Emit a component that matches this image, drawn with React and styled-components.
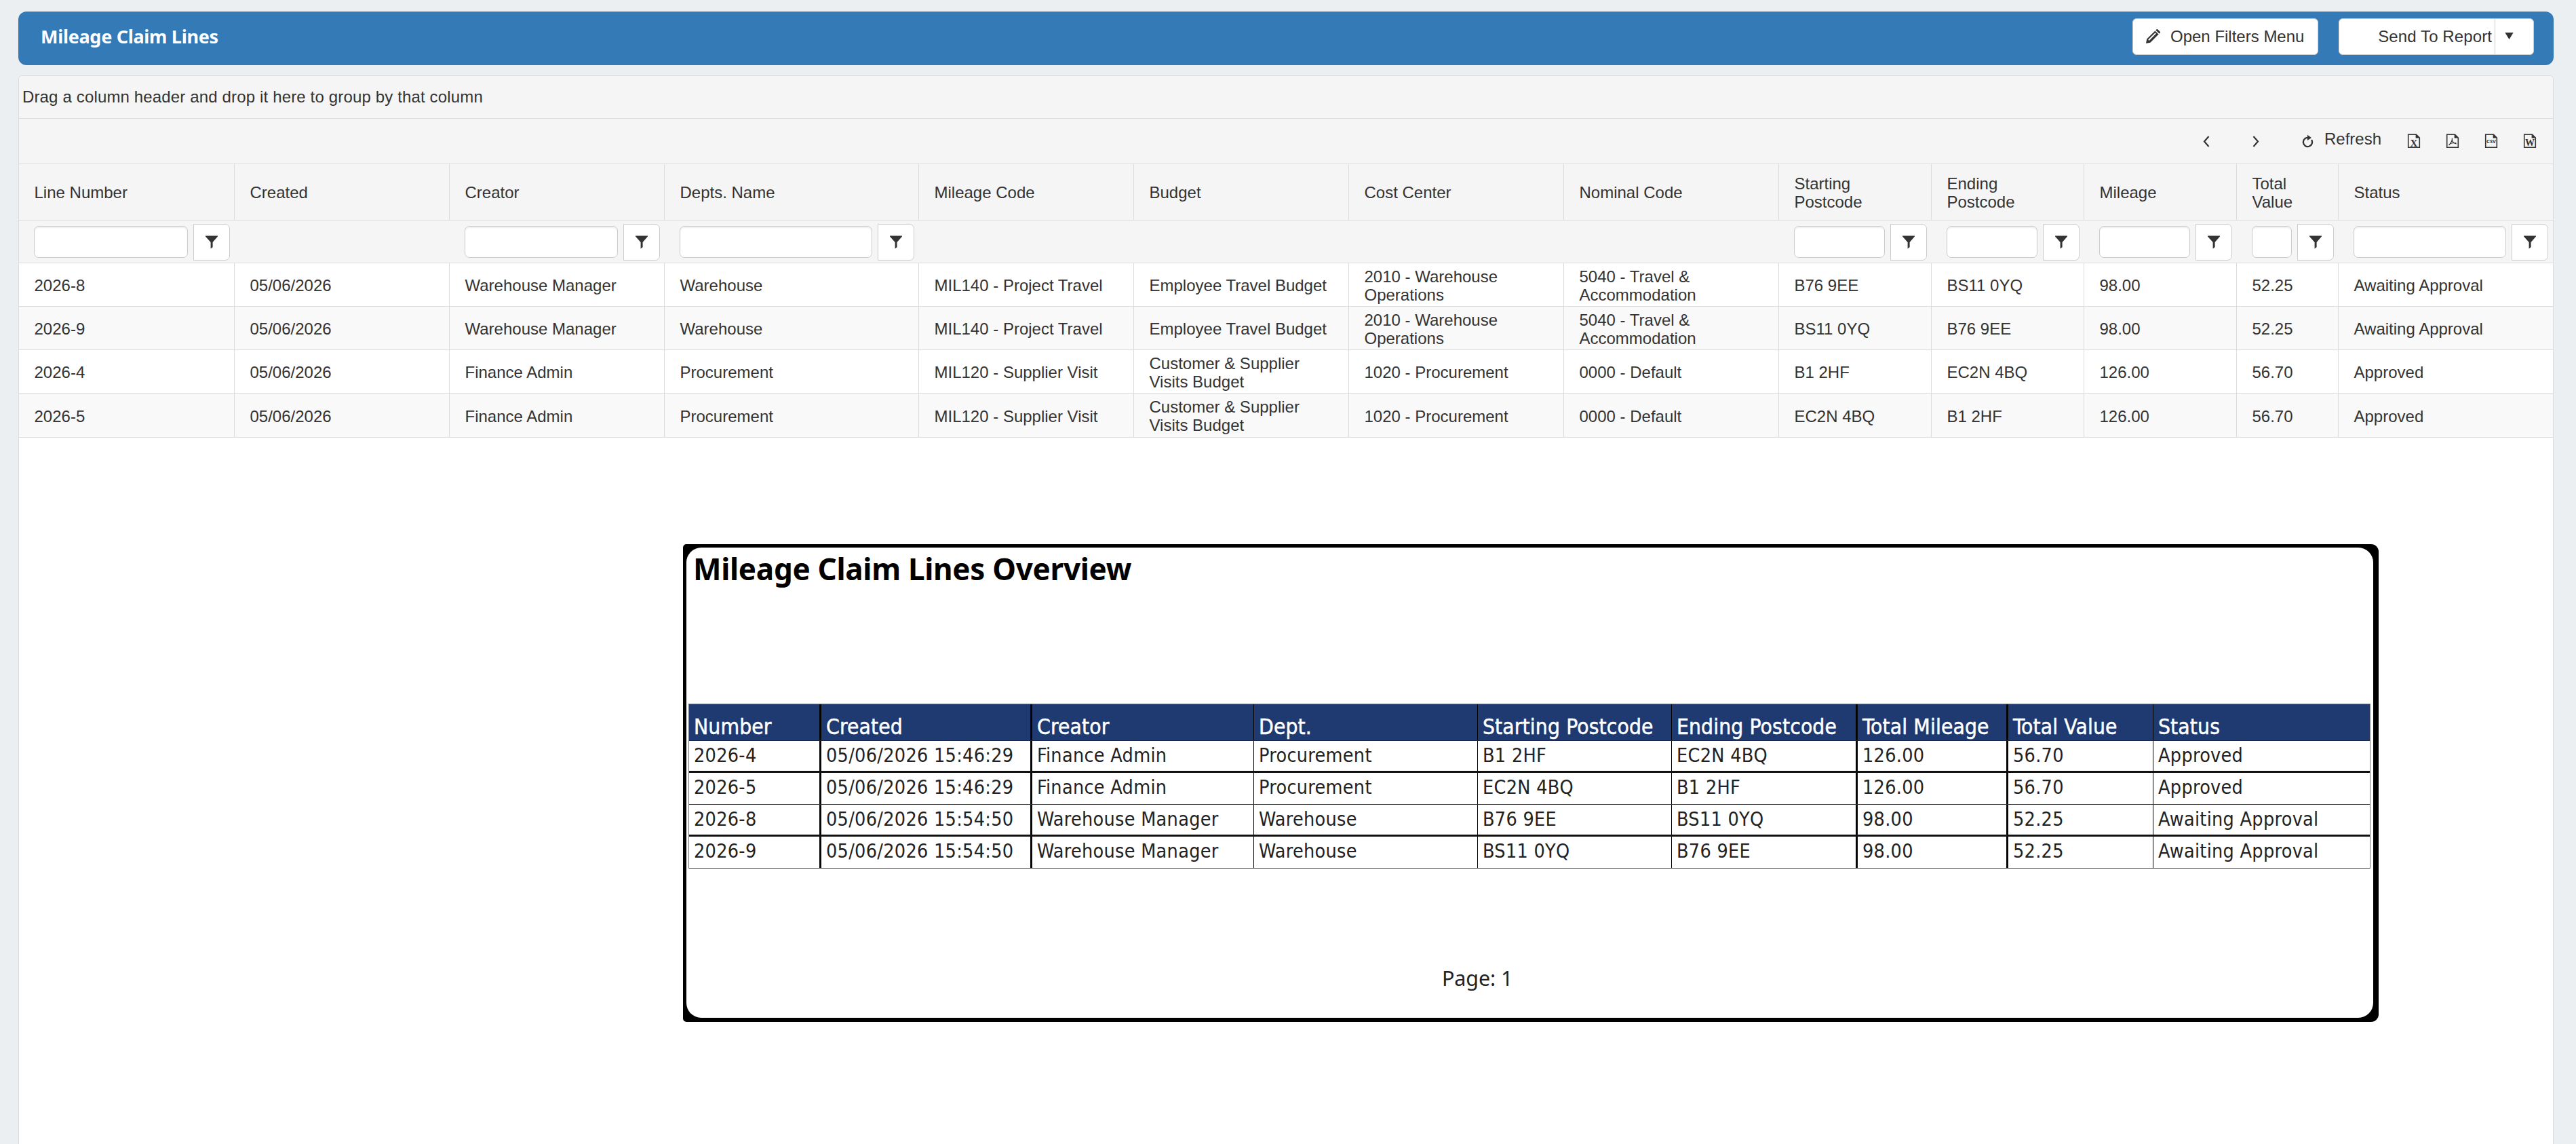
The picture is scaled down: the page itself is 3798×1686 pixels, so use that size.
import React from "react";
import styled, { createGlobalStyle, css } from "styled-components";

const GlobalStyle = createGlobalStyle`
  * {
    box-sizing: border-box;
  }
  body {
    margin: 0;
    background-color: #ebeff2;
    overflow: hidden;
    color: #333;
    font-family: "Liberation Sans", Arial, sans-serif;
    font-size: 24px;
  }
`;

const Page = styled.div`
  display: flex;
  flex-direction: column;
  height: 1686px;
  padding: 17px 33px 0 27px;
`;

const TitleBar = styled.div`
  display: flex;
  align-items: center;
  flex: none;
  height: 79px;
  padding: 0 29px 5px 33px;
  border-radius: 12px;
  background-color: #337ab7;
  > h1 {
    margin: 0 auto 0 0;
    color: white;
    font-family: "Noto Sans", "Open Sans", sans-serif;
    font-size: 27px;
    line-height: 36px;
    letter-spacing: -0.3px;
  }
`;

const Button = styled.div`
  display: flex;
  align-items: center;
  width: ${props => props.width}px;
  height: 54px;
  border: 1px solid #ccc;
  border-radius: 6px;
  background-color: white;
  white-space: nowrap;
  > span {
    line-height: 28px;
  }
`;

const FiltersButton = styled(Button)`
  gap: 15px;
  padding-left: 18px;
  margin-right: 30px;
`;

const ReportButton = styled(Button)`
  > span {
    width: 229px;
    text-align: right;
    padding-right: 4px;
    letter-spacing: 0.1px;
  }
`;

const Arrow = styled.div`
  display: flex;
  align-items: center;
  align-self: stretch;
  flex: 1;
  border-left: 1px solid #ccc;
  padding: 0 0 3px 14px;
`;

const Grid = styled.div`
  display: flex;
  flex-direction: column;
  flex: 1;
  margin-top: 15px;
  background-color: white;
  border: solid #dadcde;
  border-width: 1px 1px 0;
  border-radius: 6px 6px 0 0;
`;

const GroupBar = styled.div`
  display: flex;
  align-items: center;
  flex: none;
  height: 63px;
  padding-left: 5px;
  letter-spacing: 0.15px;
  background-color: #f5f5f5;
  border-bottom: 1px solid #dcdcdc;
  border-radius: 6px 6px 0 0;
`;

const Toolbar = styled.div`
  display: flex;
  align-items: center;
  flex: none;
  justify-content: flex-end;
  height: 67px;
  padding-right: 24px;
  background-color: #f5f5f5;
  border-bottom: 1px solid #dcdcdc;
  > svg {
    flex: none;
  }
`;

const Pager = styled.div`
  display: flex;
  gap: 63px;
  margin-right: 63px;
`;

const Refresh = styled.div`
  display: flex;
  align-items: center;
  gap: 16px;
  margin-right: 38px;
  > span {
    line-height: 28px;
    padding-bottom: 6px;
  }
`;

const Exports = styled.div`
  display: flex;
  gap: 37px;
`;

const Row = styled.div`
  display: grid;
  flex: none;
  grid-template-columns: 318px 317px 317px 375px repeat(4, 317px) repeat(3, 225px) 150px 1fr;
  height: ${props => props.height}px;
  background-color: ${props => props.bg || "white"};
  border-bottom: 1px solid #dcdcdc;
`;

const Cell = styled.div`
  display: flex;
  align-items: center;
  padding: ${props => props.top || 3}px 2px 0 22.5px;
  border-right: 1px solid #dcdcdc;
  line-height: 26.7px;
  white-space: pre-line;
  &:last-child {
    border-right: none;
  }
`;

const FilterCell = styled.div`
  display: flex;
  align-items: center;
  gap: 8px;
  padding: 1px 7px 0 22px;
  > input {
    flex: 1;
    min-width: 0;
    height: 47px;
    border: 1px solid #ccc;
    border-radius: 7px;
    background-color: white;
    box-shadow: inset 0 2px 2px rgba(0, 0, 0, 0.07);
  }
`;

const FilterButton = styled.div`
  display: flex;
  align-items: center;
  justify-content: center;
  width: 54px;
  height: 54px;
  border: 1px solid #ccc;
  border-radius: 0 7px 7px 0;
  background-color: white;
`;

const ReportFrame = styled.div`
  width: 2500px;
  height: 704px;
  margin: 157px 0 0 979px;
  padding: 5px 8px 6px 5px;
  border-radius: 5px 11px 11px 5px;
  background-color: black;
`;

const ReportPage = styled.div`
  height: 693px;
  border-radius: 22px;
  background-color: white;
  color: #222;
  > h2 {
    margin: 0 0 168px 10px;
    color: black;
    font-family: "Noto Sans", "Open Sans", sans-serif;
    font-size: 44px;
    line-height: 62px;
    letter-spacing: -0.3px;
    white-space: nowrap;
  }
  > p {
    margin: 140px 0 0 1114px;
    font-family: "Noto Sans", "Open Sans", sans-serif;
    font-size: 30.5px;
    line-height: 42px;
    letter-spacing: -0.1px;
  }
`;

const ReportTable = styled.div`
  width: 2480px;
  margin-left: 3px;
  border: 1px solid #777;
  border-bottom: none;
  font-family: "DejaVu Sans Condensed", "DejaVu Sans", sans-serif;
  font-stretch: condensed;
`;

const ReportRow = styled.div`
  display: grid;
  grid-template-columns: 195px 311px 327px 330px 286px 274px 222px 214px 1fr;
  height: 47px;
  border-bottom: ${props => (props.thick ? "3px solid #111" : "1px solid #333")};
  font-size: 28.5px;
  line-height: 43px;
  ${props =>
    props.head &&
    css`
      height: 54px;
      border-bottom: 1px solid #14284d;
      background-color: #1e3a70;
      color: white;
      font-size: 31.5px;
      line-height: 50px;
      -webkit-text-stroke: 0.5px white;
    `}
`;

const ReportCell = styled.div`
  padding: ${props => (props.head ? 8 : 0)}px 0 0 7px;
  white-space: nowrap;
  overflow: hidden;
  letter-spacing: ${props => (props.head ? "0.12px" : "0.28px")};
  border-right: ${props => (props.thick ? "3px solid #050505" : "1px solid #000")};
  &:last-child {
    border-right: none;
  }
`;

const columns = [
  { title: "Line Number", filter: true },
  { title: "Created" },
  { title: "Creator", filter: true },
  { title: "Depts. Name", filter: true },
  { title: "Mileage Code" },
  { title: "Budget" },
  { title: "Cost Center" },
  { title: "Nominal Code" },
  { title: "Starting\nPostcode", filter: true },
  { title: "Ending\nPostcode", filter: true },
  { title: "Mileage", filter: true },
  { title: "Total\nValue", filter: true },
  { title: "Status", filter: true },
];

const warehouse = [
  "05/06/2026",
  "Warehouse Manager",
  "Warehouse",
  "MIL140 - Project Travel",
  "Employee Travel Budget",
  "2010 - Warehouse\nOperations",
  "5040 - Travel &\nAccommodation",
];
const finance = [
  "05/06/2026",
  "Finance Admin",
  "Procurement",
  "MIL120 - Supplier Visit",
  "Customer & Supplier\nVisits Budget",
  "1020 - Procurement",
  "0000 - Default",
];

const lines = [
  ["2026-8", ...warehouse, "B76 9EE", "BS11 0YQ", "98.00", "52.25", "Awaiting Approval"],
  ["2026-9", ...warehouse, "BS11 0YQ", "B76 9EE", "98.00", "52.25", "Awaiting Approval"],
  ["2026-4", ...finance, "B1 2HF", "EC2N 4BQ", "126.00", "56.70", "Approved"],
  ["2026-5", ...finance, "EC2N 4BQ", "B1 2HF", "126.00", "56.70", "Approved"],
];

const reportColumns = [
  "Number",
  "Created",
  "Creator",
  "Dept.",
  "Starting Postcode",
  "Ending Postcode",
  "Total Mileage",
  "Total Value",
  "Status",
];
const thickColumns = [0, 1, 5, 6];

const reportLines = [
  ["2026-4", "05/06/2026 15:46:29", "Finance Admin", "Procurement", "B1 2HF", "EC2N 4BQ", "126.00", "56.70", "Approved"],
  ["2026-5", "05/06/2026 15:46:29", "Finance Admin", "Procurement", "EC2N 4BQ", "B1 2HF", "126.00", "56.70", "Approved"],
  ["2026-8", "05/06/2026 15:54:50", "Warehouse Manager", "Warehouse", "B76 9EE", "BS11 0YQ", "98.00", "52.25", "Awaiting Approval"],
  ["2026-9", "05/06/2026 15:54:50", "Warehouse Manager", "Warehouse", "BS11 0YQ", "B76 9EE", "98.00", "52.25", "Awaiting Approval"],
];

const PencilIcon = () => (
  <svg width="22" height="22" viewBox="0 0 22 22">
    <path d="M1 21l1.2-6.4L14.4 2.4l5.2 5.2L7.4 19.8z" fill="#333" />
    <path d="M15.4 1.4l1-1a1.4 1.4 0 0 1 2 0l3.2 3.2a1.4 1.4 0 0 1 0 2l-1 1z" fill="#333" />
    <path d="M4.2 15.6L14.6 5.2l1.3 1.3L5.6 16.9z" fill="white" />
  </svg>
);

const Chevron = ({ d }) => (
  <svg width="10" height="17" viewBox="0 0 10 17">
    <path d={d} fill="none" stroke="#333" strokeWidth="2.2" />
  </svg>
);

const RefreshIcon = () => (
  <svg width="17" height="20" viewBox="0 0 17 20">
    <path d="M13.6 7.2a6.6 6.6 0 1 1-4.9-2.4" fill="none" stroke="#333" strokeWidth="2.3" transform="rotate(8 8 11)" />
    <path d="M8 0.8l6 4.2-6 4z" fill="#333" />
  </svg>
);

const FunnelIcon = () => (
  <svg width="18" height="20" viewBox="0 0 18 20">
    <path d="M0 0.5h18v1L10.6 10v7.2L7.6 19.5V10L0 1.5z" fill="#333" />
  </svg>
);

const FileIcon = ({ children }) => (
  <svg width="20" height="22" viewBox="0 0 20 22">
    <path d="M1.7 1.2h11.8l4.8 4.8v14.2H1.7z" fill="none" stroke="#333" strokeWidth="1.6" />
    <path d="M12.6 0.8v5.6h6z" fill="#333" />
    {children}
  </svg>
);

const FileText = styled.text`
  font-family: ${props => props.face || '"Noto Sans", sans-serif'};
  font-size: ${props => props.size}px;
  font-weight: bold;
  text-anchor: middle;
  fill: #333;
`;

function LinesGrid() {
  return (
    <>
      <Row height={83} bg="#f5f5f5">
        {columns.map(col => (
          <Cell key={col.title}>{col.title}</Cell>
        ))}
      </Row>
      <Row height={63} bg="#f5f5f5">
        {columns.map(col =>
          col.filter ? (
            <FilterCell key={col.title}>
              <input />
              <FilterButton>
                <FunnelIcon />
              </FilterButton>
            </FilterCell>
          ) : (
            <div key={col.title} />
          )
        )}
      </Row>
      {lines.map((line, i) => (
        <Row key={line[0]} height={i === 3 ? 65 : 64} bg={i % 2 ? "#f9f9f9" : "white"}>
          {line.map((value, j) => (
            <Cell key={j} top={4}>
              {value}
            </Cell>
          ))}
        </Row>
      ))}
    </>
  );
}

function Report() {
  return (
    <ReportFrame>
      <ReportPage>
        <h2>Mileage Claim Lines Overview</h2>
        <ReportTable>
          <ReportRow head>
            {reportColumns.map((title, i) => (
              <ReportCell key={title} head thick={thickColumns.includes(i)}>
                {title}
              </ReportCell>
            ))}
          </ReportRow>
          {reportLines.map((line, i) => (
            <ReportRow key={line[0]} thick={i % 2 === 0}>
              {line.map((value, j) => (
                <ReportCell key={j} thick={thickColumns.includes(j)}>
                  {value}
                </ReportCell>
              ))}
            </ReportRow>
          ))}
        </ReportTable>
        <p>Page: 1</p>
      </ReportPage>
    </ReportFrame>
  );
}

export default function App() {
  return (
    <Page>
      <GlobalStyle />
      <TitleBar>
        <h1>Mileage Claim Lines</h1>
        <FiltersButton width={274}>
          <PencilIcon />
          <span>Open Filters Menu</span>
        </FiltersButton>
        <ReportButton width={288}>
          <span>Send To Report</span>
          <Arrow>
            <svg width="13" height="10" viewBox="0 0 13 10">
              <path d="M0.3 0h12.4L6.5 10z" fill="#333" />
            </svg>
          </Arrow>
        </ReportButton>
      </TitleBar>
      <Grid>
        <GroupBar>Drag a column header and drop it here to group by that column</GroupBar>
        <Toolbar>
          <Pager>
            <Chevron d="M8.5 1L2 8.5 8.5 16" />
            <Chevron d="M1.5 1L8 8.5 1.5 16" />
          </Pager>
          <Refresh>
            <RefreshIcon />
            <span>Refresh</span>
          </Refresh>
          <Exports>
            <FileIcon>
              <FileText x="10" y="18.5" size="15" face='"Liberation Serif", serif'>X</FileText>
            </FileIcon>
            <FileIcon>
              <path
                d="M9.2 6.5c1 3-1.5 7-4.7 10.5M9.3 9c.5 3.5 3 5.500 6.500 6M5.500 15.500c3-2 6.500-2.500 10-1.500"
                fill="none"
                stroke="#333"
                strokeWidth="1.2"
              />
            </FileIcon>
            <FileIcon>
              <FileText x="10" y="14" size="7.5">CSV</FileText>
            </FileIcon>
            <FileIcon>
              <FileText x="10" y="18" size="14" face='"Liberation Serif", serif'>W</FileText>
            </FileIcon>
          </Exports>
        </Toolbar>
        <LinesGrid />
        <Report />
      </Grid>
    </Page>
  );
}
